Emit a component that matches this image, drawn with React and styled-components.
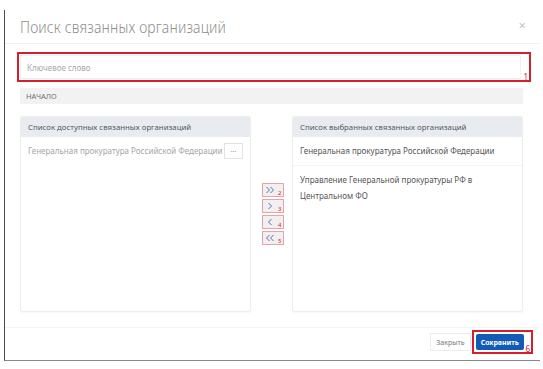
import React from "react";
import styled, { createGlobalStyle } from "styled-components";

const GlobalStyle = createGlobalStyle`
  html, body {
    margin: 0;
    padding: 0;
    background: #ffffff;
  }
  body {
    font-family: "Noto Sans", "Open Sans", sans-serif;
    padding: 10px 3px 0 4px;
  }
  * { box-sizing: border-box; }
`;

const available = ["Генеральная прокуратура Российской Федерации"];
const selected = [
  "Генеральная прокуратура Российской Федерации",
  "Управление Генеральной прокуратуры РФ в Центральном ФО",
];

// chevron strokes for the move buttons
const moves = [
  { d: "M1.5 1 L4.5 4 L1.5 7 M5.5 1 L8.5 4 L5.5 7", n: 2 },
  { d: "M3.5 1 L6.5 4 L3.5 7", n: 3 },
  { d: "M6.5 1 L3.5 4 L6.5 7", n: 4 },
  { d: "M8.5 1 L5.5 4 L8.5 7 M4.5 1 L1.5 4 L4.5 7", n: 5 },
];

export default function App() {
  return (
    <>
      <GlobalStyle />
      <Frame>
        <Header>
          <Title>Поиск связанных организаций</Title>
          <Close>×</Close>
        </Header>

        <Body>
          <Marked>
            <SearchInput placeholder="Ключевое слово" />
            <Mark>1</Mark>
          </Marked>

          <Breadcrumb>НАЧАЛО</Breadcrumb>

          <Lists>
            <Panel>
              <PanelHead>Список доступных связанных организаций</PanelHead>
              {available.map((name) => (
                <AvailRow key={name}>
                  <span>{name}</span>
                  <DotsButton>...</DotsButton>
                </AvailRow>
              ))}
            </Panel>

            <MoveColumn>
              {moves.map((m) => (
                <MoveButton key={m.n}>
                  <svg width="10" height="8" viewBox="0 0 10 8">
                    <path d={m.d} fill="none" stroke="#5a72a0" strokeWidth="1" />
                  </svg>
                  <Sub>{m.n}</Sub>
                </MoveButton>
              ))}
            </MoveColumn>

            <Panel>
              <PanelHead>Список выбранных связанных организаций</PanelHead>
              {selected.map((name) => (
                <ChosenRow key={name}>{name}</ChosenRow>
              ))}
            </Panel>
          </Lists>
        </Body>

        <Footer>
          <CloseButton>Закрыть</CloseButton>
          <SaveMark>
            <SaveButton>Сохранить</SaveButton>
            <Mark>6</Mark>
          </SaveMark>
        </Footer>
      </Frame>
    </>
  );
}

const Frame = styled.div`
  width: 536px;
  height: 351px;
  border-left: 1px solid #4a4a4a;
  border-bottom: 1px solid #8a8a8a;
  display: flex;
  flex-direction: column;
`;

const Header = styled.div`
  height: 34px;
  padding: 0 14px 0 15px;
  border-bottom: 1px solid #f1f1f1;
  display: flex;
  align-items: center;
  justify-content: space-between;
`;

const Title = styled.h1`
  margin: 0;
  font-size: 17px;
  font-weight: 300;
  color: #8e8e8e;
  letter-spacing: 0.2px;
  white-space: nowrap;
  transform: scaleX(0.82);
  transform-origin: left center;
`;

const Close = styled.span`
  font-size: 13px;
  color: #c4c4c4;
  margin-top: -4px;
`;

const Body = styled.div`
  flex: 1;
  padding: 8px 17px 0 15px;
  display: flex;
  flex-direction: column;
`;

const Marked = styled.div`
  position: relative;
  margin-left: -3px;
  width: 514px;
  padding: 1px 8px 1px 1px;
  border: 2px solid #d4202c;
`;

const Mark = styled.span`
  position: absolute;
  right: 1px;
  bottom: -1px;
  font-size: 8px;
  line-height: 1;
  color: #d4202c;
`;

const SearchInput = styled.input`
  display: block;
  width: 100%;
  height: 24px;
  border: 1px solid #f0f0f0;
  padding: 0 6px;
  font-family: inherit;
  font-size: 8px;
  outline: none;
  &::placeholder {
    color: #a8a8a8;
  }
`;

const Breadcrumb = styled.div`
  margin-top: 6px;
  height: 16px;
  background: #f2f2f2;
  padding-left: 6px;
  display: flex;
  align-items: center;
  font-size: 7.5px;
  font-weight: 400;
  color: #6e6e6e;
`;

const Lists = styled.div`
  margin-top: 12px;
  display: grid;
  grid-template-columns: 231px 1fr 231px;
  height: 196px;
`;

const Panel = styled.div`
  border: 1px solid #eeeeee;
  border-radius: 2px;
  box-shadow: 0 1px 2px rgba(0, 0, 0, 0.04);
  display: flex;
  flex-direction: column;
`;

const PanelHead = styled.div`
  height: 20px;
  background: #e8ebef;
  padding-left: 7px;
  display: flex;
  align-items: center;
  font-size: 7.8px;
  color: #555a60;
`;

const AvailRow = styled.div`
  height: 27px;
  padding: 0 7px;
  display: flex;
  align-items: center;
  justify-content: space-between;
  font-size: 8px;
  color: #a6a6a6;
  white-space: nowrap;
`;

const DotsButton = styled.span`
  flex-shrink: 0;
  width: 19px;
  height: 16px;
  border: 1px solid #e2e2e2;
  display: flex;
  align-items: center;
  justify-content: center;
  font-size: 7px;
  color: #9a9a9a;
  padding-bottom: 3px;
`;

const ChosenRow = styled.div`
  padding: 6px 7px;
  min-height: 26px;
  display: flex;
  align-items: center;
  font-size: 8px;
  line-height: 16px;
  color: #555;
  border-bottom: 1px solid #f3f3f3;
  &:last-child {
    border-bottom: none;
  }
`;

const MoveColumn = styled.div`
  display: flex;
  flex-direction: column;
  align-items: center;
  justify-content: center;
  gap: 2px;
  padding-left: 2px;
`;

const MoveButton = styled.span`
  position: relative;
  width: 22px;
  height: 14px;
  border: 1px solid #e5a3aa;
  background: #f3eff1;
  display: flex;
  align-items: center;
  justify-content: center;
  padding-right: 5px;
`;

const Sub = styled.span`
  position: absolute;
  right: 1px;
  bottom: 0;
  font-size: 6px;
  line-height: 1;
  color: #d4202c;
`;

const Footer = styled.div`
  height: 33px;
  margin-top: 13px;
  border-top: 1px solid #f3f3f3;
  padding: 0 7px 4px 0;
  display: flex;
  align-items: center;
  justify-content: flex-end;
  gap: 1px;
`;

const CloseButton = styled.span`
  height: 18px;
  padding: 0 5px;
  border: 1px solid #ececec;
  display: flex;
  align-items: center;
  font-size: 7px;
  color: #777;
`;

const SaveMark = styled.div`
  position: relative;
  border: 2px solid #d4202c;
  padding: 2px 7px 2px 2px;
`;

const SaveButton = styled.span`
  height: 16px;
  padding: 0 5px;
  background: #125cb7;
  border-radius: 2px;
  display: flex;
  align-items: center;
  font-size: 7px;
  font-weight: 700;
  color: #ffffff;
`;
